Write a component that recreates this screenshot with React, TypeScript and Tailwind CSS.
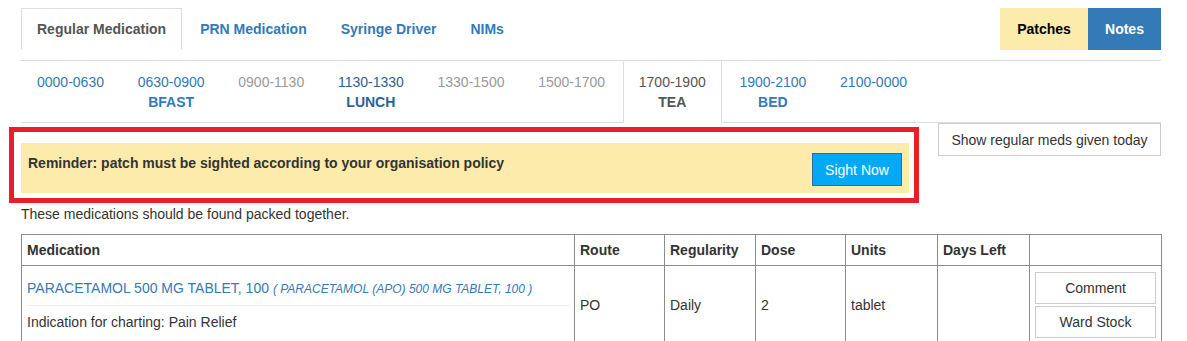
const topTabs = [
  { label: "Regular Medication", active: true },
  { label: "PRN Medication" },
  { label: "Syringe Driver" },
  { label: "NIMs" },
];

type Slot = { time: string; meal?: string; tone: "link" | "muted" | "hover" | "active" };

const slots: Slot[] = [
  { time: "0000-0630", tone: "link" },
  { time: "0630-0900", meal: "BFAST", tone: "link" },
  { time: "0900-1130", tone: "muted" },
  { time: "1130-1330", meal: "LUNCH", tone: "hover" },
  { time: "1330-1500", tone: "muted" },
  { time: "1500-1700", tone: "muted" },
  { time: "1700-1900", meal: "TEA", tone: "active" },
  { time: "1900-2100", meal: "BED", tone: "link" },
  { time: "2100-0000", tone: "link" },
];

const toneClass = {
  link: "border-transparent text-[#337ab7]",
  muted: "border-transparent text-[#999]",
  hover: "border-transparent text-[#2a6496]",
  active: "border-x-[#ddd] border-t-transparent border-b-white bg-white text-[#555]",
};

const headers = ["Medication", "Route", "Regularity", "Dose", "Units", "Days Left", ""];

export default function App() {
  return (
    <div className="min-h-[341px] bg-white font-['Liberation_Sans',Arial,sans-serif] text-[14px] leading-5 text-[#333]">
      <div className="ml-[21px] w-[1140px] pt-[8px]">
        {/* main tabs */}
        <div className="flex items-start justify-between">
          <ul className="flex">
            {topTabs.map((t) => (
              <li key={t.label} className="mr-[2px]">
                <a
                  href="#"
                  className={
                    t.active
                      ? "block border border-[#ddd] border-b-transparent px-[15px] py-[10px] font-bold text-[#555]"
                      : "block border border-transparent px-[15px] py-[10px] font-bold text-[#337ab7]"
                  }
                >
                  {t.label}
                </a>
              </li>
            ))}
          </ul>
          <div className="flex h-[42px]">
            <button className="flex w-[88px] items-center justify-center bg-[#fcebab] font-bold text-black">
              Patches
            </button>
            <button className="flex w-[73px] items-center justify-center bg-[#337ab7] font-bold text-white">
              Notes
            </button>
          </div>
        </div>

        {/* time slots */}
        <div className="mt-[10px] border-t border-[#ddd]">
          <ul className="flex border-b border-[#ddd]">
            {slots.map((s) => (
              <li key={s.time} className="-mb-px mr-[1.7px]">
                <a
                  href="#"
                  className={`block h-[62px] border px-[15px] py-[10px] text-center ${toneClass[s.tone]}`}
                >
                  <div>{s.time}</div>
                  {s.meal && <div className="font-bold">{s.meal}</div>}
                </a>
              </li>
            ))}
          </ul>
        </div>

        {/* reminder */}
        <div className="flex items-start justify-between">
          <div className="-ml-[12px] mt-[4px] w-[910px] border-[5px] border-[#e81f26] pt-[11px] pr-[5px] pb-[5px] pl-[7px]">
            <div className="flex h-[50px] items-start justify-between bg-[#fcebab] px-[7px] pt-[10px]">
              <span className="font-bold">Reminder: patch must be sighted according to your organisation policy</span>
              <button className="h-[33px] w-[90px] border border-[#2c6ea6] bg-[#03a9f4] text-white">Sight Now</button>
            </div>
          </div>
          <button className="h-[33px] w-[223px] border border-[#ccc] bg-white text-[#333]">
            Show regular meds given today
          </button>
        </div>

        <p className="mt-px">These medications should be found packed together.</p>

        {/* medication table */}
        <table className="mt-[10px] w-[1140px] table-fixed border-collapse border border-[#8c8c8c]">
          <colgroup>
            <col className="w-[553px]" />
            <col className="w-[90px]" />
            <col className="w-[91px]" />
            <col className="w-[90px]" />
            <col className="w-[92px]" />
            <col className="w-[92px]" />
            <col className="w-[132px]" />
          </colgroup>
          <thead>
            <tr>
              {headers.map((h, i) => (
                <th key={i} className="border border-[#8c8c8c] p-[5px] text-left font-bold">
                  {h}
                </th>
              ))}
            </tr>
          </thead>
          <tbody>
            <tr>
              <td className="border border-[#8c8c8c] p-[5px] align-middle">
                <div className="border-b border-[#eee] pt-[7px] pb-[6px]">
                  <a href="#" className="text-[#337ab7]">
                    PARACETAMOL 500 MG TABLET, 100{" "}
                    <i className="text-[12px]">( PARACETAMOL (APO) 500 MG TABLET, 100 )</i>
                  </a>
                </div>
                <div className="pt-[6px] pb-[7px]">Indication for charting: Pain Relief</div>
              </td>
              <td className="border border-[#8c8c8c] p-[5px] align-middle">PO</td>
              <td className="border border-[#8c8c8c] p-[5px] align-middle">Daily</td>
              <td className="border border-[#8c8c8c] p-[5px] align-middle">2</td>
              <td className="border border-[#8c8c8c] p-[5px] align-middle">tablet</td>
              <td className="border border-[#8c8c8c] p-[5px] align-middle"></td>
              <td className="border border-[#8c8c8c] p-[5px] align-middle">
                <div className="flex flex-col gap-[2px]">
                  <button className="h-[32px] w-full border border-[#ccc] bg-white">Comment</button>
                  <button className="h-[32px] w-full border border-[#ccc] bg-white">Ward Stock</button>
                </div>
              </td>
            </tr>
          </tbody>
        </table>
      </div>
    </div>
  );
}
